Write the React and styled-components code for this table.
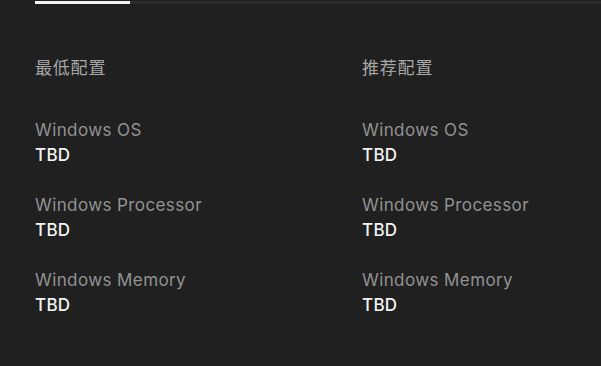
import React from "react";
import styled, { createGlobalStyle } from "styled-components";

const GlobalStyle = createGlobalStyle`
  html, body {
    margin: 0;
    background: #202020;
    font-family: Inter, "Noto Sans", "Noto Sans CJK SC", sans-serif;
  }
`;

const Page = styled.div`
  width: 601px;
  height: 366px;
  background: #202020;
  overflow: hidden;
`;

const TabLine = styled.div`
  margin: 1px 0 0 35px;
  height: 3px;
  background: #2b2b2b;
  display: flex;
`;

const Indicator = styled.div`
  width: 95px;
  background: #f5f5f5;
`;

const Columns = styled.div`
  display: grid;
  grid-template-columns: 327px 1fr;
  padding: 51px 35px 0;
`;

const Column = styled.div`
  display: flex;
  flex-direction: column;
`;

const Heading = styled.div`
  font-family: "Noto Sans CJK SC", sans-serif;
  font-size: 17px;
  letter-spacing: 0.8px;
  line-height: 24px;
  color: #a6a6a6;
  margin-bottom: 39px;
`;

const Spec = styled.div`
  display: flex;
  flex-direction: column;
  margin-bottom: 25px;
`;

const Label = styled.div`
  font-size: 17px;
  letter-spacing: 0.4px;
  line-height: 25px;
  color: #929292;
`;

const Value = styled.div`
  font-size: 17px;
  letter-spacing: 0.3px;
  line-height: 25px;
  font-weight: 500;
  color: #f2f2f2;
`;

const specs = [
  { label: "Windows OS", value: "TBD" },
  { label: "Windows Processor", value: "TBD" },
  { label: "Windows Memory", value: "TBD" },
];

const SpecColumn = ({ title }) => (
  <Column>
    <Heading>{title}</Heading>
    {specs.map((s) => (
      <Spec key={s.label}>
        <Label>{s.label}</Label>
        <Value>{s.value}</Value>
      </Spec>
    ))}
  </Column>
);

const App = () => {
  return (
    <Page>
      <GlobalStyle />
      <TabLine>
        <Indicator />
      </TabLine>
      <Columns>
        <SpecColumn title="最低配置" />
        <SpecColumn title="推荐配置" />
      </Columns>
    </Page>
  );
};

export default App;
